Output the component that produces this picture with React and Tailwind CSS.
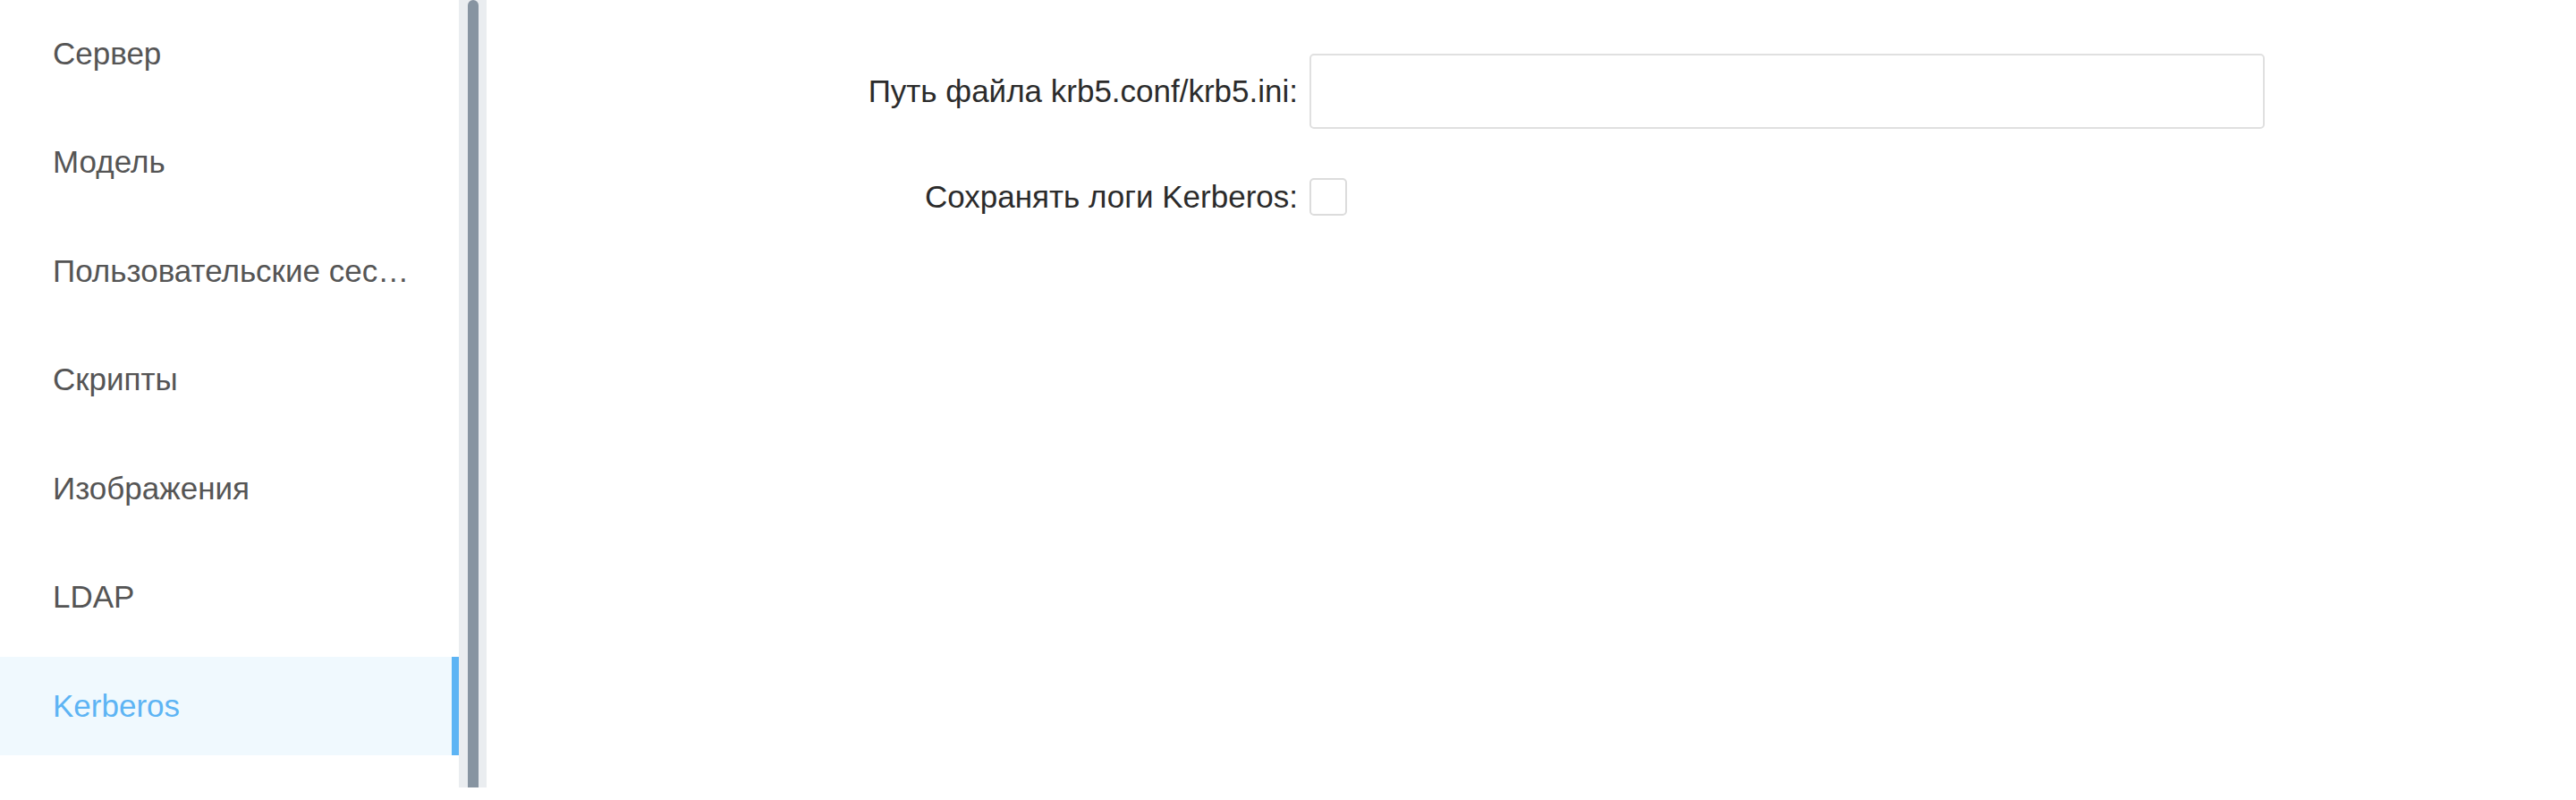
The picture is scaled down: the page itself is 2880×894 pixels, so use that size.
const items = ['Сервер', 'Модель', 'Пользовательские сессии', 'Скрипты', 'Изображения', 'LDAP', 'Kerberos']

function NavItem({ label, active }) {
  return (
    <div
      className={`flex h-[110px] items-center ${active ? 'bg-[#f0f9fe]' : ''}`}
    >
      <span
        className={`min-w-0 flex-1 truncate pl-[59px] pr-[40px] leading-normal ${active ? 'text-[#5db4f4]' : 'text-[#555555]'}`}
      >
        {label}
      </span>
      <div className={`h-full w-[8px] shrink-0 ${active ? 'bg-[#5db4f4]' : ''}`} />
    </div>
  )
}

export default function App() {
  return (
    <div className="flex h-[880px] w-full bg-white font-['Liberation_Sans',Arial,sans-serif] text-[35px] leading-none">
      <nav className="flex w-[513px] shrink-0 flex-col gap-[11.5px] pt-[5px]">
        {items.map((label) => (
          <NavItem key={label} label={label} active={label === 'Kerberos'} />
        ))}
      </nav>

      <div className="flex w-[31px] shrink-0 justify-center bg-[#eaedf0]">
        <div className="h-full w-[12px] rounded-t-full bg-[#8794a1]" />
      </div>

      <main className="flex-1 pt-[60px] text-[#2b2b2b]">
        <div className="flex items-center">
          <label className="w-[920px] shrink-0 pr-[13px] text-right leading-normal">Путь файла krb5.conf/krb5.ini:</label>
          <input
            type="text"
            className="h-[84px] w-[1068px] rounded-[5px] border-2 border-[#e0e0e0] bg-white px-4 outline-none"
          />
        </div>
        <div className="mt-[50px] flex items-center">
          <label className="w-[920px] shrink-0 pr-[13px] text-right leading-normal">Сохранять логи Kerberos:</label>
          <span className="block h-[42px] w-[42px] rounded-[5px] border-2 border-[#dcdcdc] bg-white" />
        </div>
      </main>
    </div>
  )
}
